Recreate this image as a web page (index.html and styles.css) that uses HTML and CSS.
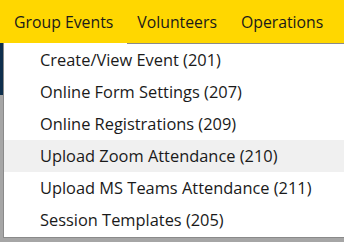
FILE: index.html
```html
<!DOCTYPE html>
<html lang="en">
<head>
  <meta charset="UTF-8" />
  <meta name="viewport" content="width=device-width, initial-scale=1" />
  <title>Group Events Menu</title>
  <link rel="stylesheet" href="styles.css">
</head>
<body>
  <nav class="topnav">
    <a class="nav-item open" href="#">Group Events</a>
    <a class="nav-item" href="#">Volunteers</a>
    <a class="nav-item" href="#">Operations</a>
  </nav>

  <div class="page">
    <div class="sidebar"></div>

    <ul class="dropdown">
      <li><a href="#">Create/View Event (201)</a></li>
      <li><a href="#">Online Form Settings (207)</a></li>
      <li><a href="#">Online Registrations (209)</a></li>
      <li><a href="#" class="hover">Upload Zoom Attendance (210)</a></li>
      <li><a href="#">Upload MS Teams Attendance (211)</a></li>
      <li><a href="#">Session Templates (205)</a></li>
    </ul>
  </div>
</body>
</html>
```

FILE: styles.css
```css
body {
  margin: 0;
  font-family: "Open Sans", "Noto Sans", sans-serif;
  color: #1a1a1a;
  overflow: hidden;
}

.topnav {
  display: flex;
  height: 43px;
  padding-left: 2px;
  background: #ffd700;
  white-space: nowrap;
}

.nav-item {
  display: flex;
  align-items: center;
  padding: 0 12px;
  font-size: 15.8px;
  color: #1a1a1a;
  text-decoration: none;
}

.page {
  position: relative;
  height: 199px;
  background: #a6a6a6;
}

.sidebar {
  width: 3px;
  height: 52px;
  background: #0e2f4d;
}

/* menu hangs over the page content */
.dropdown {
  position: absolute;
  top: 0;
  left: 3px;
  right: 0;
  margin: 0;
  padding: 1px 0 1px;
  list-style: none;
  background: #fff;
  border-left: 1px solid #8a8a8a;
  border-bottom: 1px solid #8a8a8a;
}

.dropdown::before {
  content: "";
  position: absolute;
  top: 0;
  left: 123px;
  right: 0;
  height: 1px;
  background: #8a8a8a;
}

.dropdown a {
  display: block;
  height: 32px;
  line-height: 32px;
  padding-left: 36px;
  font-size: 16.4px;
  color: #1a1a1a;
  text-decoration: none;
  white-space: nowrap;
}

.dropdown a.hover {
  background: #f0f0f0;
}
```
